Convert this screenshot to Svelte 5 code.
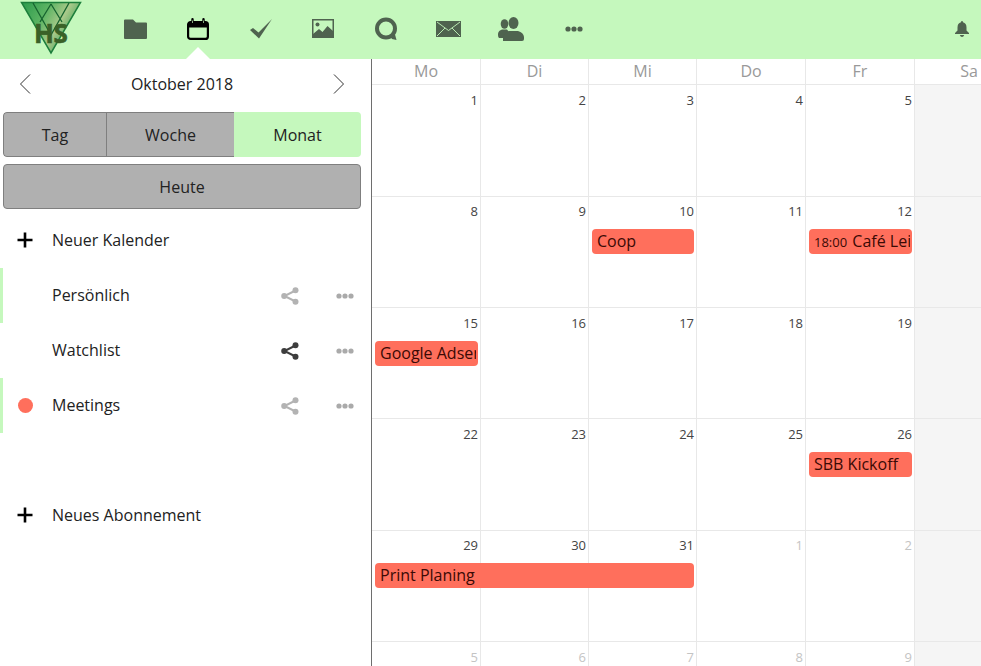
<script>
  const weekdays = ['Mo', 'Di', 'Mi', 'Do', 'Fr', 'Sa', 'So'];

  const weeks = [
    { days: [1, 2, 3, 4, 5, 6, 7], events: [] },
    {
      days: [8, 9, 10, 11, 12, 13, 14],
      events: [
        { col: 3, span: 1, title: 'Coop' },
        { col: 5, span: 1, time: '18:00', title: 'Café Leitung' }
      ]
    },
    { days: [15, 16, 17, 18, 19, 20, 21], events: [{ col: 1, span: 1, title: 'Google Adsense' }] },
    { days: [22, 23, 24, 25, 26, 27, 28], events: [{ col: 5, span: 1, title: 'SBB Kickoff' }] },
    { days: [29, 30, 31, 1, 2, 3, 4], muted: [3, 4, 5, 6], events: [{ col: 1, span: 3, title: 'Print Planing' }] },
    { days: [5, 6, 7, 8, 9, 10, 11], muted: [0, 1, 2, 3, 4, 5, 6], events: [] }
  ];

  const calendars = [
    { name: 'Persönlich', enabled: true },
    { name: 'Watchlist', shared: true },
    { name: 'Meetings', enabled: true, dot: true }
  ];
</script>

<div class="page">
  <header class="topbar">
    <div class="logo">
      <svg width="62" height="54" viewBox="0 0 62 54">
        <defs>
          <linearGradient id="logoFill" x1="0" y1="0" x2="1" y2="0.5">
            <stop offset="0" stop-color="#2a9a4c" />
            <stop offset="0.4" stop-color="#5cb463" />
            <stop offset="0.68" stop-color="#a9c98a" />
            <stop offset="1" stop-color="#2f9c50" />
          </linearGradient>
        </defs>
        <path d="M1.500 1.500H60.500L31 52Z" fill="url(#logoFill)" stroke="#1d7f3c" stroke-width="1.500" />
        <path d="M13 2L31 34L49 2M31 3L20 21M31 3L42 21" fill="none" stroke="#16632f" stroke-width="1.300" />
      </svg>
      <span class="logo-text">HS</span>
    </div>
    <nav class="apps">
      <span class="app">
        <svg width="24" height="20" viewBox="0 0 24 20"><path d="M1 1.500Q1 0.500 2 0.500H10L13 3.500H23Q24 3.500 24 4.500V19Q24 20 23 20H2Q1 20 1 19Z" fill="#4f634f" /></svg>
      </span>
      <span class="app active">
        <svg width="22" height="22" viewBox="0 0 22 22">
          <rect x="1.100" y="4" width="19.800" height="16.900" rx="2.500" fill="none" stroke="#000" stroke-width="2.200" />
          <rect x="1.100" y="4" width="19.800" height="5.500" fill="#000" />
          <path d="M5.500 1.300V6M16.500 1.300V6" stroke="#000" stroke-width="2.400" stroke-linecap="round" />
          <path d="M5.500 2.500V5M16.500 2.500V5" stroke="#c5f8bd" stroke-width="0.700" />
        </svg>
      </span>
      <span class="app">
        <svg width="22" height="20" viewBox="0 0 22 20"><path d="M0 11L3 9L8.500 13.500L22 0L9 19.500Z" fill="#4f634f" /></svg>
      </span>
      <span class="app">
        <svg width="22" height="19" viewBox="0 0 22 19">
          <rect x="0.750" y="0.750" width="20.500" height="17.500" fill="none" stroke="#4f634f" stroke-width="1.500" />
          <circle cx="5.500" cy="5.500" r="2" fill="#4f634f" />
          <path d="M1 18V15L7 10L10.500 13L15.500 7L21 12V18Z" fill="#4f634f" />
        </svg>
      </span>
      <span class="app">
        <svg width="24" height="24" viewBox="0 0 24 24">
          <circle cx="12" cy="11.500" r="9" fill="none" stroke="#4f634f" stroke-width="4" />
          <path d="M16 19L21 17.500L22.500 23L18 22Z" fill="#4f634f" />
        </svg>
      </span>
      <span class="app">
        <svg width="25" height="16" viewBox="0 0 25 16">
          <rect width="25" height="16" fill="#4f634f" />
          <path d="M1 1L12.500 9.500L24 1M1 15L9 7M24 15L16 7" fill="none" stroke="#c5f8bd" stroke-width="0.900" />
        </svg>
      </span>
      <span class="app">
        <svg width="26" height="24" viewBox="0 0 26 24" fill="#4f634f">
          <ellipse cx="6.500" cy="7" rx="3.800" ry="4.800" />
          <path d="M0 16.500Q0.500 13.500 4 12.500H9L11 15L7 21H1Q0 20 0 18Z" />
          <ellipse cx="15.500" cy="6" rx="5" ry="6" />
          <path d="M5 24V20Q5.500 15.500 11 14H20Q25.500 15.500 26 20V22Q26 24 24 24Z" />
        </svg>
      </span>
      <span class="app">
        <svg width="18" height="6" viewBox="0 0 18 6" fill="#4f634f">
          <circle cx="3" cy="3" r="2.600" /><circle cx="9" cy="3" r="2.600" /><circle cx="15" cy="3" r="2.600" />
        </svg>
      </span>
    </nav>
    <span class="bell">
      <svg width="14" height="16" viewBox="0 0 14 16" fill="#4f634f">
        <path d="M7 0Q8 0 8 1.200Q11.500 2.200 11.500 6.500V9.500L14 12V13H0V12L2.500 9.500V6.500Q2.500 2.200 6 1.200Q6 0 7 0Z" />
        <path d="M4.800 14H9.200Q8.500 16 7 16Q5.500 16 4.800 14Z" />
      </svg>
    </span>
  </header>

  <div class="body">
    <aside class="sidebar">
      <div class="month-nav">
        <svg width="11" height="20" viewBox="0 0 11 20"><path d="M10 0.500L0.500 10L10 19.500" fill="none" stroke="#333" /></svg>
        <span>Oktober 2018</span>
        <svg width="11" height="20" viewBox="0 0 11 20"><path d="M1 0.500L10.500 10L1 19.500" fill="none" stroke="#333" /></svg>
      </div>

      <div class="segments">
        <button class="seg tag">Tag</button>
        <button class="seg week">Woche</button>
        <button class="seg month">Monat</button>
      </div>
      <button class="today">Heute</button>

      <div class="row add first">
        <svg class="plus" width="16" height="16" viewBox="0 0 16 16"><path d="M8 0.500V15.500M0.500 8H15.500" stroke="#000" stroke-width="2.600" /></svg>
        <span>Neuer Kalender</span>
      </div>

      {#each calendars as cal}
        <div class="row cal" class:enabled={cal.enabled}>
          <span class="slot">
            {#if cal.dot}<span class="dot"></span>{/if}
          </span>
          <span class="name">{cal.name}</span>
          <svg class="share" class:on={cal.shared} width="18" height="18" viewBox="0 0 18 18">
            <path d="M14.500 3.500L3.500 9L14.500 14.500" fill="none" stroke="currentColor" stroke-width="2" />
            <circle cx="14.500" cy="3.200" r="3" fill="currentColor" />
            <circle cx="3.200" cy="9" r="3" fill="currentColor" />
            <circle cx="14.500" cy="14.800" r="3" fill="currentColor" />
          </svg>
          <svg class="more" width="18" height="6" viewBox="0 0 18 6" fill="#aaa">
            <circle cx="3" cy="3" r="2.600" /><circle cx="9" cy="3" r="2.600" /><circle cx="15" cy="3" r="2.600" />
          </svg>
        </div>
      {/each}

      <div class="row add second">
        <svg class="plus" width="16" height="16" viewBox="0 0 16 16"><path d="M8 0.500V15.500M0.500 8H15.500" stroke="#000" stroke-width="2.600" /></svg>
        <span>Neues Abonnement</span>
      </div>
    </aside>

    <main class="calendar">
      <div class="head">
        {#each weekdays as d}
          <div class="head-cell">{d}</div>
        {/each}
      </div>
      {#each weeks as week}
        <div class="week-row">
          {#each week.days as day, i}
            <div class="day" class:weekend={i > 4} class:muted={week.muted?.includes(i)} style="grid-column: {i + 1}">
              {day}
            </div>
          {/each}
          {#each week.events as ev}
            <div class="event" style="grid-column: {ev.col} / span {ev.span}">
              <span class="event-text">
                {#if ev.time}<small>{ev.time}</small>{/if}
                {ev.title}
              </span>
            </div>
          {/each}
        </div>
      {/each}
    </main>
  </div>
</div>

<style>
  :global(body) {
    margin: 0;
    overflow: hidden;
  }

  .page {
    width: 981px;
    height: 666px;
    overflow: hidden;
    font-family: "Open Sans", sans-serif;
    font-size: 16px;
    color: #222;
    background: #fff;
  }

  .topbar {
    height: 59px;
    display: flex;
    align-items: center;
    background: #c5f8bd;
  }

  .logo {
    width: 104px;
    height: 59px;
    flex-shrink: 0;
    position: relative;
    padding: 1px 0 0 20px;
    box-sizing: border-box;
  }

  .logo svg {
    display: block;
  }

  .logo-text {
    position: absolute;
    left: 34px;
    top: 17px;
    font-size: 26px;
    font-weight: 700;
    line-height: 32px;
    letter-spacing: -0.5px;
    color: #3a6128;
    -webkit-text-stroke: 0.6px #3a6128;
  }

  .apps {
    display: flex;
    height: 59px;
  }

  .app {
    width: 62.7px;
    height: 59px;
    display: flex;
    align-items: center;
    justify-content: center;
    position: relative;
    padding-bottom: 2px;
    box-sizing: border-box;
  }

  .app.active::after {
    content: "";
    position: absolute;
    left: 50%;
    bottom: 0;
    margin-left: -12px;
    border: 12px solid transparent;
    border-top: 0;
    border-bottom-color: #fff;
  }

  .bell {
    margin-left: auto;
    margin-right: 12px;
    display: flex;
    padding-bottom: 2px;
  }

  .body {
    display: flex;
    height: 607px;
  }

  .sidebar {
    width: 372px;
    flex-shrink: 0;
    box-sizing: border-box;
    border-right: 1px solid #6e6e6e;
  }

  .month-nav {
    height: 50px;
    padding: 0 27px 0 20px;
    display: flex;
    align-items: center;
    justify-content: space-between;
  }

  button {
    font: inherit;
    color: #222;
    background: #b0b0b0;
    cursor: pointer;
    box-sizing: border-box;
  }

  .segments {
    display: flex;
    height: 45px;
    margin: 3px 10px 0 3px;
    border-radius: 4px;
    overflow: hidden;
  }

  .seg {
    border: 1px solid #7f7f7f;
    border-right: 0;
    padding: 0;
    height: 45px;
  }

  .seg.tag {
    width: 103px;
    border-radius: 4px 0 0 4px;
  }

  .seg.week {
    width: 128px;
  }

  .seg.month {
    width: 127px;
    background: #c5f8bd;
    border: 0;
  }

  .today {
    display: block;
    width: 358px;
    height: 45px;
    margin: 7px 0 0 3px;
    border: 1px solid #7f7f7f;
    border-radius: 4px;
    padding: 0;
  }

  .row {
    height: 55px;
    display: flex;
    align-items: center;
    box-sizing: border-box;
    border-left: 3px solid transparent;
    padding-left: 14px;
  }

  .row.add {
    height: 50px;
  }

  .row.first {
    margin-top: 6px;
    margin-bottom: 3px;
  }

  .row.second {
    margin-top: 57px;
  }

  .plus {
    margin-right: 19px;
  }

  .cal.enabled {
    border-left-color: #c5f8bd;
  }

  .slot {
    width: 16px;
    margin-right: 19px;
    display: flex;
  }

  .dot {
    width: 15px;
    height: 15px;
    margin-left: 1px;
    border-radius: 50%;
    background: #ff6f5c;
  }

  .name {
    flex: 1;
    padding-bottom: 2px;
  }

  .share {
    color: #b3b3b3;
    margin-right: 37px;
  }

  .share.on {
    color: #3d3d3d;
  }

  .more {
    margin-right: 17px;
  }

  .calendar {
    flex: 1;
    min-width: 0;
    overflow: hidden;
    display: grid;
    grid-template-rows: 26px 111.8px 111.33px 111.33px 111.33px 111.33px 111.33px;
  }

  .head,
  .week-row {
    display: grid;
    grid-template-columns: 109px 108px 108px 109px 109px 109px 109px;
  }

  .head {
    box-sizing: border-box;
    border-bottom: 1px solid #e8e8e8;
  }

  .head-cell {
    text-align: center;
    font-size: 16px;
    line-height: 25px;
    color: #999;
    border-right: 1px solid #e8e8e8;
    box-sizing: border-box;
  }

  .week-row {
    box-sizing: border-box;
    border-bottom: 1px solid #e8e8e8;
    grid-template-rows: 32.5px 25px 1fr;
  }

  .day {
    grid-row: 1 / -1;
    text-align: right;
    font-size: 13px;
    line-height: 18px;
    color: #444;
    padding: 5.5px 2px 0 0;
    border-right: 1px solid #e8e8e8;
    box-sizing: border-box;
  }

  .day.weekend {
    background: #f5f5f5;
  }

  .day.muted {
    color: #c4c4c4;
  }

  .event {
    grid-row: 2;
    z-index: 1;
    margin: 0 3px;
    padding: 0 2px 0 5px;
    min-width: 0;
    background: #ff6f5c;
    border-radius: 4px;
    line-height: 25px;
    color: #3b0a05;
  }

  .event-text {
    display: block;
    white-space: nowrap;
    overflow: hidden;
  }

  .event small {
    font-size: 13px;
    margin-right: 1px;
  }
</style>
